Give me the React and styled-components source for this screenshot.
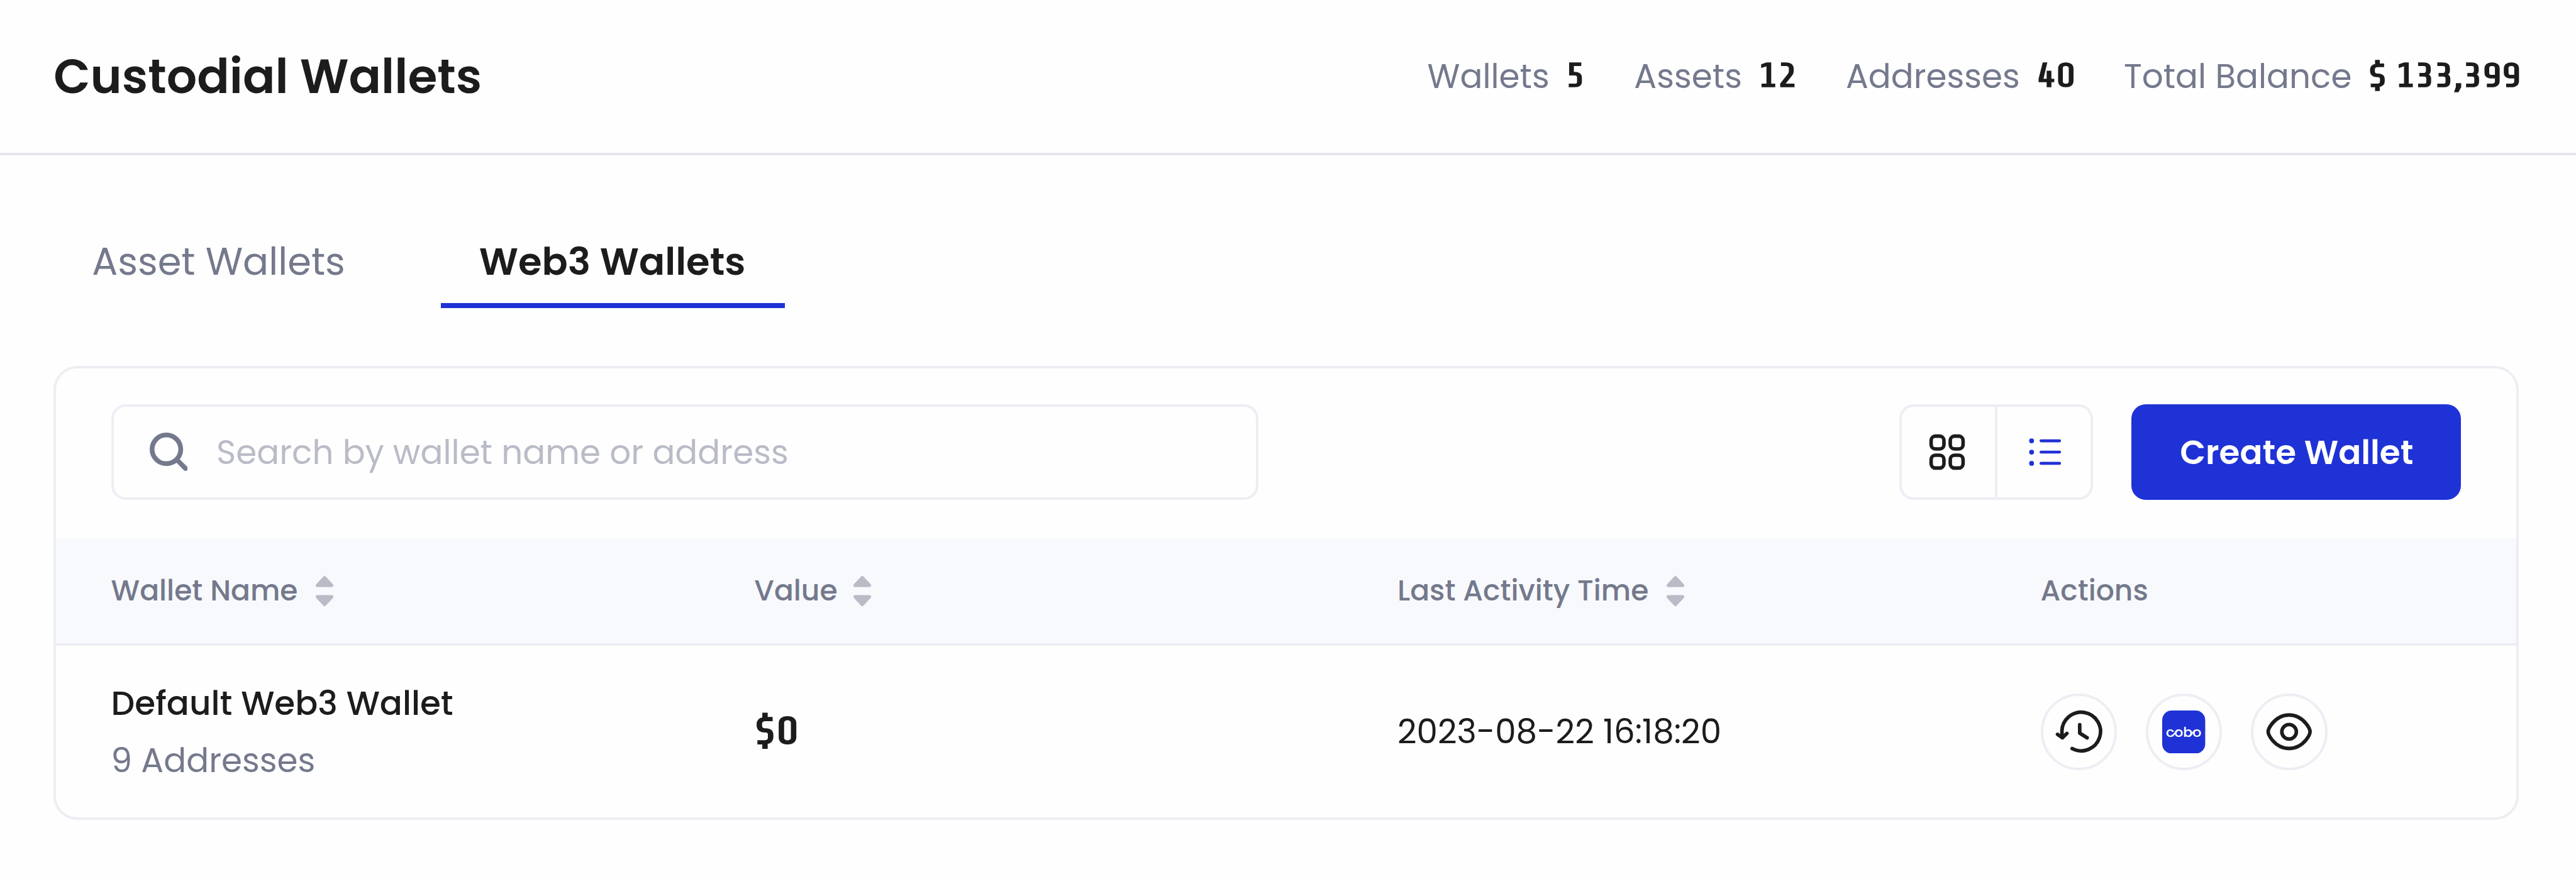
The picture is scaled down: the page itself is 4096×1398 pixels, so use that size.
import React from "react";
import styled, { createGlobalStyle } from "styled-components";

// Design units to screen pixels.
const u = (n) => `${Math.round(n * 0.76035 * 100) / 100}px`;

const color = {
  ink: "#1c1c1c",
  muted: "#74798c",
  faint: "#b9bcc6",
  line: "#edeef4",
  divider: "#e4e6ec",
  brand: "#1f32d6",
  head: "#f8f9fd",
};

const GlobalStyle = createGlobalStyle`
  *, *::before, *::after { box-sizing: border-box; }
  html, body { margin: 0; padding: 0; background: #fefefe; }
  body { font-family: Poppins, Inter, sans-serif; color: ${color.ink}; }
  svg { display: block; flex: none; }
`;

const Page = styled.div`
  width: 100%;
  min-height: 100vh;
  background: #fefefe;
  overflow: hidden;
`;

const Header = styled.header`
  display: flex;
  align-items: center;
  justify-content: space-between;
  height: ${u(325)};
  padding: 0 ${u(116)} 0 ${u(112)};
  border-bottom: 4px solid ${color.divider};
`;

const Title = styled.h1`
  margin: 0;
  font-size: ${u(100)};
  font-weight: 600;
  line-height: ${u(150)};
  white-space: nowrap;
`;

const Stats = styled.div`
  display: flex;
  align-items: center;
  gap: ${u(103)};
`;

const Stat = styled.div`
  display: flex;
  align-items: center;
  gap: ${u(34)};
  font-size: ${u(70)};
  line-height: ${u(105)};
  white-space: nowrap;
`;

const StatLabel = styled.span`
  color: ${color.muted};
`;

const NumberBox = styled.span`
  display: block;
  width: ${(p) => u(p.$width)};
  height: ${u(105)};
  padding-top: ${(p) => u(p.$drop || 0)};
  line-height: ${u(100)};
`;

const NumberText = styled.span`
  display: inline-block;
  font-family: "Share Tech", "Titillium Web", sans-serif;
  font-size: ${(p) => u(p.$size || 70)};
  font-weight: 700;
  line-height: ${u(100)};
  letter-spacing: ${(p) => u(p.$tight ? 0.1 : 1)};
  word-spacing: ${u(-3)};
  white-space: nowrap;
  transform: scaleX(1.22);
  transform-origin: left center;
`;

const Content = styled.main`
  padding: ${u(162)} ${u(120)} 0 ${u(112)};
`;

const Tabs = styled.nav`
  display: flex;
  gap: ${u(120)};
  height: ${u(158)};
  margin-bottom: ${u(120)};
`;

const Tab = styled.div`
  width: ${(p) => u(p.$width)};
  padding-right: ${(p) => (p.$active ? u(3) : 0)};
  border-bottom: 8px solid ${(p) => (p.$active ? color.brand : "transparent")};
  color: ${(p) => (p.$active ? color.ink : color.muted)};
  font-size: ${u(80)};
  font-weight: ${(p) => (p.$active ? 600 : 400)};
  line-height: ${u(120)};
  text-align: center;
  white-space: nowrap;
`;

const Card = styled.section`
  height: ${u(950)};
  border: 4px solid ${color.line};
  border-radius: ${u(50)};
  overflow: hidden;
`;

const Toolbar = styled.div`
  display: flex;
  align-items: center;
  height: ${u(355)};
  padding: 0 ${u(115)} ${u(5)};
`;

const SearchBox = styled.label`
  display: flex;
  align-items: center;
  gap: ${u(60)};
  width: ${u(2400)};
  height: ${u(200)};
  margin-right: auto;
  padding-left: ${u(75)};
  border: 4px solid ${color.line};
  border-radius: ${u(30)};
`;

const Placeholder = styled.span`
  padding-top: ${u(2)};
  color: ${color.faint};
  font-size: ${u(70)};
  line-height: ${u(105)};
  white-space: nowrap;
`;

const ViewToggle = styled.div`
  display: flex;
  width: ${u(405)};
  height: ${u(200)};
  margin-right: ${u(80)};
  border: 4px solid ${color.line};
  border-radius: ${u(30)};
`;

const ViewOption = styled.span`
  display: flex;
  flex: ${(p) => (p.$divided ? `0 0 ${u(200)}` : "1")};
  align-items: center;
  justify-content: center;
  padding: ${(p) => (p.$divided ? `0 ${u(5)} 0 0` : `0 0 0 ${u(5)}`)};
  border-right: ${(p) => (p.$divided ? `4px solid ${color.line}` : "0")};
`;

const CreateButton = styled.button`
  width: ${u(690)};
  height: ${u(200)};
  padding: ${u(2)} 0 0 ${u(2)};
  border: 0;
  border-radius: ${u(30)};
  background: ${color.brand};
  color: #fff;
  font-family: inherit;
  font-size: ${u(70)};
  font-weight: 600;
  line-height: ${u(105)};
  white-space: nowrap;
`;

const Row = styled.div`
  display: grid;
  grid-template-columns: ${u(1345)} ${u(1345)} ${u(1345)} 1fr;
  align-items: center;
  height: ${(p) => u(p.$head ? 225 : 361)};
  padding-left: ${u(115)};
  background: ${(p) => (p.$head ? color.head : "transparent")};
  border-bottom: ${(p) => (p.$head ? `4px solid ${color.line}` : "0")};
`;

const HeadCell = styled.div`
  display: flex;
  align-items: center;
  gap: ${(p) => u(p.$gap || 38)};
  color: ${color.muted};
  font-size: ${u(60)};
  font-weight: 500;
  line-height: ${u(90)};
  white-space: nowrap;
`;

const CellText = styled.div`
  color: ${(p) => (p.$muted ? color.muted : color.ink)};
  font-size: ${u(70)};
  font-weight: ${(p) => (p.$strong ? 500 : 400)};
  line-height: ${u(120)};
  white-space: nowrap;
`;

const Actions = styled.div`
  display: flex;
  gap: ${u(60)};
`;

const ActionButton = styled.span`
  display: flex;
  align-items: center;
  justify-content: center;
  width: ${u(160)};
  height: ${u(160)};
  border: 4px solid ${color.line};
  border-radius: 50%;
`;

const Svg = ({ w, h, children, ...rest }) => (
  <svg
    width={u(w)}
    height={u(h)}
    viewBox={`${-w / 2} ${-h / 2} ${w} ${h}`}
    fill="none"
    strokeLinecap="round"
    strokeLinejoin="round"
    {...rest}
  >
    {children}
  </svg>
);

const SearchIcon = () => (
  <Svg w={80} h={80} stroke={color.muted} strokeWidth="10">
    <circle cx="-5" cy="-5" r="30" />
    <path d="M17 17L35 35" />
  </Svg>
);

const GridIcon = () => (
  <Svg w={100} h={100} stroke={color.ink} strokeWidth="7.4">
    {[-20, 20].map((x) =>
      [-20, 20].map((y) => (
        <rect key={`${x},${y}`} x={x - 13.4} y={y - 13.4} width="26.8" height="26.8" rx="9" />
      ))
    )}
  </Svg>
);

const ListIcon = () => (
  <Svg w={100} h={100} stroke={color.brand} strokeWidth="6.2">
    {[-23.6, 0, 23.6].map((y) => (
      <g key={y}>
        <circle cx="-28.5" cy={y} r="5.1" fill={color.brand} stroke="none" />
        <path d={`M-8.8 ${y}H30`} />
      </g>
    ))}
  </Svg>
);

const SortIcon = () => (
  <Svg w={37} h={70} fill={color.faint} stroke={color.faint} strokeWidth="7">
    <path d="M-15 -10L0 -26L15 -10Z" />
    <path d="M-15 14L0 30L15 14Z" />
  </Svg>
);

const HistoryIcon = () => (
  <Svg w={110} h={110} stroke={color.ink} strokeWidth="7.5">
    <path d="M-34.8 11L-35.9 0A40.4 40.4 0 1 1 -14.5 35.2" />
    <path d="M-45 5.4L-34.8 12.6L-25.4 3.6" />
    <path d="M1.4 -14.6V2.9L17 12.7" />
  </Svg>
);

const EyeIcon = () => (
  <Svg w={110} h={110} stroke={color.ink} strokeWidth="7.5">
    <path d="M-43.8 0C-43.8 -5.5 -39.5 -12 -35.5 -17C-26 -28.5 -14 -35 0 -35S26 -28.5 35.5 -17C39.5 -12 43.8 -5.5 43.8 0S39.5 12 35.5 17C26 28.5 14 35 0 35S-26 28.5 -35.5 17C-39.5 12 -43.8 5.5 -43.8 0Z" />
    <circle r="15.2" />
  </Svg>
);

const CoboLogo = () => (
  <Svg w={90} h={90}>
    <rect x="-45" y="-45" width="90" height="90" rx="20" fill={color.brand} />
    <g stroke="#fff" strokeWidth="3">
      <path d="M-23.5 8.2L-13.5 -3.2" />
      <path d="M13 8.2L23 -3.2" />
    </g>
    <text
      x="-37"
      y="10.4"
      fill="#fff"
      fontFamily="Poppins, sans-serif"
      fontWeight="500"
      fontSize="28.5"
      textLength="74"
      lengthAdjust="spacingAndGlyphs"
    >
      cobo
    </text>
  </Svg>
);

const stats = [
  { label: "Wallets", value: "5", width: 40 },
  { label: "Assets", value: "12", width: 80 },
  { label: "Addresses", value: "40", width: 80 },
  { label: "Total Balance", value: "$ 133,399", width: 319, tight: true },
];

const columns = [
  { label: "Wallet Name", sortable: true },
  { label: "Value", sortable: true, gap: 34 },
  { label: "Last Activity Time", sortable: true },
  { label: "Actions" },
];

export default function App() {
  return (
    <Page>
      <GlobalStyle />
      <Header>
        <Title>Custodial Wallets</Title>
        <Stats>
          {stats.map((s) => (
            <Stat key={s.label}>
              <StatLabel>{s.label}</StatLabel>
              <NumberBox $width={s.width}>
                <NumberText $tight={s.tight}>{s.value}</NumberText>
              </NumberBox>
            </Stat>
          ))}
        </Stats>
      </Header>
      <Content>
        <Tabs>
          <Tab $width={690}>Asset Wallets</Tab>
          <Tab $width={720} $active>
            Web3 Wallets
          </Tab>
        </Tabs>
        <Card>
          <Toolbar>
            <SearchBox>
              <SearchIcon />
              <Placeholder>Search by wallet name or address</Placeholder>
            </SearchBox>
            <ViewToggle>
              <ViewOption $divided>
                <GridIcon />
              </ViewOption>
              <ViewOption>
                <ListIcon />
              </ViewOption>
            </ViewToggle>
            <CreateButton>Create Wallet</CreateButton>
          </Toolbar>
          <Row $head>
            {columns.map((c) => (
              <HeadCell key={c.label} $gap={c.gap}>
                {c.label}
                {c.sortable && <SortIcon />}
              </HeadCell>
            ))}
          </Row>
          <Row>
            <div>
              <CellText $strong>Default Web3 Wallet</CellText>
              <CellText $muted>9 Addresses</CellText>
            </div>
            <NumberBox $width={90} $drop={3}>
              <NumberText $size={80}>$0</NumberText>
            </NumberBox>
            <CellText>2023-08-22 16:18:20</CellText>
            <Actions>
              <ActionButton>
                <HistoryIcon />
              </ActionButton>
              <ActionButton>
                <CoboLogo />
              </ActionButton>
              <ActionButton>
                <EyeIcon />
              </ActionButton>
            </Actions>
          </Row>
        </Card>
      </Content>
    </Page>
  );
}
